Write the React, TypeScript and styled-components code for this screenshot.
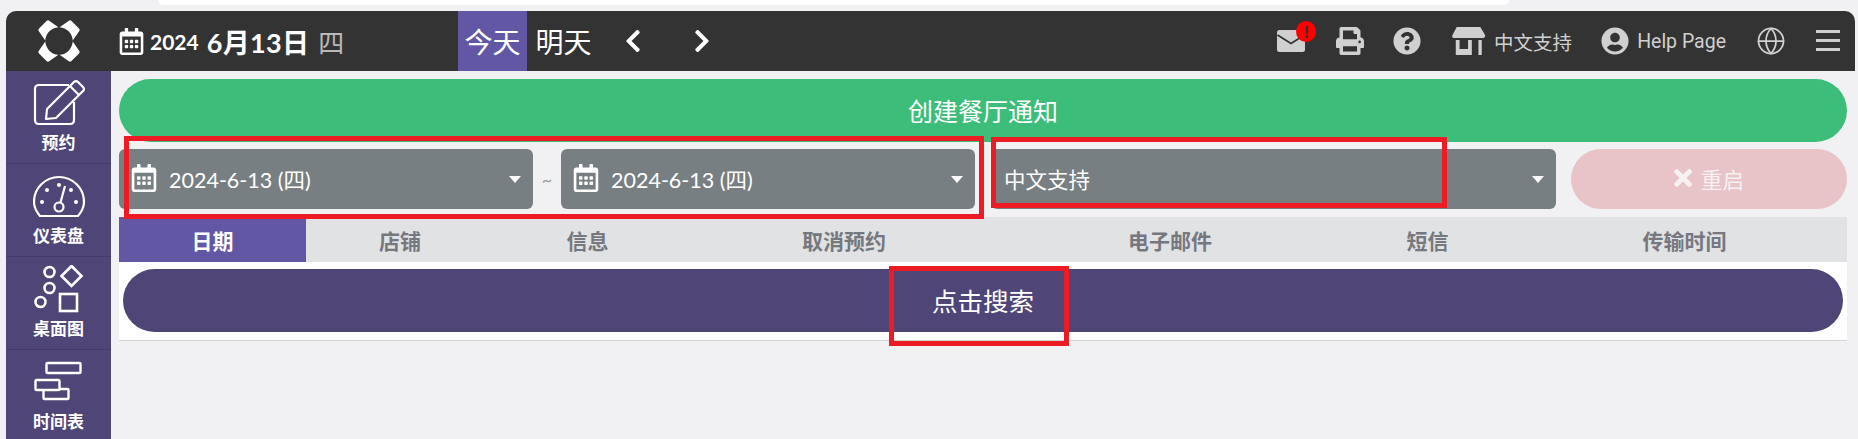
import styled, { createGlobalStyle } from "styled-components";
import { FaPrint, FaQuestionCircle, FaRegCalendarAlt, FaTimes, FaUserCircle, FaChevronLeft, FaChevronRight } from "react-icons/fa";
import { Globe } from "lucide-react";

const GlobalStyle = createGlobalStyle`
    * { box-sizing: border-box; }
    html, body { margin: 0; padding: 0; background: #f1f1f3; overflow: hidden; }
    body { font-family: Lato, "Noto Sans CJK SC", sans-serif; }
`;

const Page = styled.div`
    position: relative;
    width: 1858px;
    height: 439px;
    overflow: hidden;
    background: #f1f1f3;
`;

const TopSheet = styled.div`
    width: 1351px;
    height: 5px;
    margin-left: 158px;
    background: #fff;
    border-radius: 0 0 10px 10px;
`;

const Frame = styled.div`
    margin: 6px 3px 0 6px;
`;

const Header = styled.header`
    display: flex;
    align-items: center;
    height: 60px;
    background: #333;
    border-radius: 10px 10px 0 0;
    color: #fff;
`;

const LogoBox = styled.div`
    display: flex;
    justify-content: center;
    align-items: center;
    width: 105px;
    height: 100%;
`;

const DateBox = styled.div`
    display: flex;
    align-items: center;
    width: 347px;
    padding: 0 0 0 7px;
    height: 100%;
`;

const Year = styled.span`
    margin-left: 5px;
    font-size: 21px;
    font-weight: 700;
`;

const Day = styled.span`
    margin-left: 8px;
    font-size: 27px;
    font-weight: 700;
    letter-spacing: 0.3px;
`;

const Weekday = styled.span`
    margin-left: 9px;
    font-size: 26px;
    color: #b9b9b9;
`;

const DayTab = styled.div<{ $active?: boolean }>`
    display: flex;
    align-items: center;
    justify-content: center;
    width: 69px;
    height: 100%;
    padding-left: ${(p) => (p.$active ? "0" : "4px")};
    font-size: 28px;
    background: ${(p) => (p.$active ? "#6257a5" : "transparent")};
`;

const Arrows = styled.div`
    display: flex;
    align-items: center;
    gap: 43px;
    margin-left: 24px;
    font-size: 26px;
`;

const Tools = styled.div`
    display: flex;
    align-items: center;
    margin-left: auto;
    padding-right: 14px;
    color: #d0d0d0;
`;

const ToolIcon = styled.span<{ $gap: number }>`
    position: relative;
    display: flex;
    align-items: center;
    margin-left: ${(p) => p.$gap}px;
`;

const Badge = styled.span`
    position: absolute;
    top: -9px;
    right: -11px;
    width: 20px;
    height: 21px;
    border-radius: 50%;
    background: #f00;
    color: #333;
    font-size: 17px;
    font-weight: 900;
    line-height: 21px;
    text-align: center;
`;

const ToolLabel = styled.span`
    margin-left: 8px;
    font-size: 19.5px;
`;

const HelpLabel = styled(ToolLabel)`
    font-family: Roboto, "Noto Sans CJK SC", sans-serif;
`;

const Main = styled.div`
    display: flex;
    height: 368px;
`;

const Sidebar = styled.nav`
    flex: none;
    width: 105px;
    background: #4f4677;
`;

const NavItem = styled.div`
    display: flex;
    flex-direction: column;
    align-items: center;
    height: 93px;
    padding-top: 8px;
    border-bottom: 1px solid #443b69;
    color: #fff;
    font-size: 17px;
    font-weight: 700;
    svg { display: block; height: 50px; }
`;

const NavLabel = styled.span`
    margin-top: 2px;
    line-height: 24px;
`;

const Content = styled.main`
    flex: 1;
    padding: 8px 8px 0 8px;
`;

const NoticeButton = styled.div`
    display: flex;
    align-items: center;
    justify-content: center;
    height: 63px;
    padding-bottom: 2px;
    border-radius: 32px;
    background: #3dbd7a;
    color: #fff;
    font-size: 25px;
`;

const FilterRow = styled.div`
    display: flex;
    align-items: center;
    height: 60px;
    margin-top: 7px;
`;

const Select = styled.div<{ $width: number }>`
    position: relative;
    display: flex;
    align-items: center;
    gap: 11px;
    flex: none;
    width: ${(p) => p.$width}px;
    height: 100%;
    padding: 0 0 2px 11px;
    border-radius: 6px;
    background: #787f82;
    color: #fff;
    font-size: 21.5px;
`;

const StoreSelect = styled(Select)`
    margin-left: 16px;
    padding-left: 13px;
`;

const Caret = styled.span`
    position: absolute;
    right: 12px;
    top: 27px;
    border-left: 6px solid transparent;
    border-right: 6px solid transparent;
    border-top: 7px solid #fff;
`;

const Tilde = styled.span`
    flex: none;
    width: 28px;
    text-align: center;
    color: #9a9fa2;
    font-size: 18px;
`;

const ResetButton = styled.div`
    display: flex;
    align-items: center;
    justify-content: center;
    gap: 5px;
    flex: none;
    width: 276px;
    height: 100%;
    margin-left: 15px;
    padding: 0 4px 2px 0;
    border-radius: 30px;
    background: #e8c4c8;
    color: #f6f1f2;
    font-size: 21.5px;
`;

const TableHead = styled.div`
    display: grid;
    grid-template-columns: 187px 188px 187px 326px 326px 189px 1fr;
    height: 45px;
    margin-top: 8px;
    background: #e1e2e4;
`;

const HeadCell = styled.div<{ $active?: boolean }>`
    display: flex;
    align-items: center;
    justify-content: center;
    background: ${(p) => (p.$active ? "#6257a5" : "transparent")};
    color: ${(p) => (p.$active ? "#fff" : "#75787f")};
    font-size: 21px;
    font-weight: 700;
`;

const TableBody = styled.div`
    height: 79px;
    padding: 7px 4px 0 4px;
    background: #fff;
    border-bottom: 1px solid #d3d3d5;
`;

const SearchButton = styled.div`
    display: flex;
    align-items: center;
    justify-content: center;
    height: 63px;
    padding-bottom: 2px;
    border-radius: 32px;
    background: #4f4677;
    color: #fff;
    font-size: 25.5px;
`;

const Mark = styled.div<{ $x: number; $y: number; $w: number; $h: number }>`
    position: absolute;
    left: ${(p) => p.$x}px;
    top: ${(p) => p.$y}px;
    width: ${(p) => p.$w}px;
    height: ${(p) => p.$h}px;
    border: 5px solid #ed1c24;
`;

const Logo = () => (
    <svg width="44" height="44" viewBox="0 0 44 44" fill="#fff">
        <path d="M12.500 2 L21.400 8.300 A14 14 0 0 0 8.300 21.400 L2 12.500 Q0.500 11 2 9.500 L9.500 2 Q11 0.500 12.500 2Z" />
        <path d="M31.500 2 L22.600 8.300 A14 14 0 0 1 35.700 21.400 L42 12.500 Q43.500 11 42 9.500 L34.500 2 Q33 0.500 31.500 2Z" />
        <path d="M12.500 42 L21.400 35.700 A14 14 0 0 1 8.300 22.600 L2 31.500 Q0.500 33 2 34.500 L9.500 42 Q11 43.500 12.500 42Z" />
        <path d="M31.500 42 L22.600 35.700 A14 14 0 0 0 35.700 22.600 L42 31.500 Q43.500 33 42 34.500 L34.500 42 Q33 43.500 31.500 42Z" />
    </svg>
);

const MailIcon = () => (
    <svg width="28" height="22" viewBox="0 0 28 22">
        <rect width="28" height="22" rx="2.500" fill="#d0d0d0" />
        <path d="M0.500 5 L14 13.500 L27.500 5" fill="none" stroke="#333" strokeWidth="1.800" />
    </svg>
);

const StoreIcon = () => (
    <svg width="34" height="28" viewBox="0 0 36 28" preserveAspectRatio="none" fill="#d0d0d0">
        <path d="M5 0 H30 L35 8 Q35.500 11 33 11 H2 Q-0.500 11 0.500 8Z" />
        <path d="M4 13 H8 V22 H17 V13 H21 V28 H4Z" />
        <rect x="28" y="13" width="3.500" height="15" />
    </svg>
);

const MenuIcon = () => (
    <svg width="26" height="22" viewBox="0 0 26 22" fill="#d0d0d0">
        <rect x="1" width="24" height="3" />
        <rect x="1" y="9" width="24" height="3" />
        <rect x="1" y="18" width="24" height="3" />
    </svg>
);

const EditIcon = () => (
    <svg width="52" height="50" viewBox="0 0 52 50" fill="none" stroke="#fff" strokeWidth="2.200" strokeLinejoin="round">
        <path d="M36 6 H6 Q2 6 2 10 V41 Q2 45 6 45 H37 Q41 45 41 41 V23" />
        <path d="M13 40 L14 30 L41 3 Q43 1 45 3 L50 8 Q52 10 50 12 L23 39Z" />
        <path d="M37 7 L46 16" />
    </svg>
);

const GaugeIcon = () => (
    <svg width="52" height="42" viewBox="0 0 52 42" fill="none" stroke="#fff" strokeWidth="2.200">
        <path d="M7 40 Q1 33 1 26 A25 25 0 0 1 51 26 Q51 33 45 40Z" strokeLinejoin="round" />
        <circle cx="26" cy="31" r="4.500" />
        <path d="M27.500 26.500 L32 10" />
        <g fill="#fff" stroke="none">
            <circle cx="26" cy="9" r="2" />
            <circle cx="14" cy="14" r="2" />
            <circle cx="38" cy="14" r="2" />
            <circle cx="9" cy="26" r="2" />
            <circle cx="43" cy="26" r="2" />
        </g>
    </svg>
);

const ShapesIcon = () => (
    <svg width="50" height="50" viewBox="0 0 50 50" fill="none" stroke="#fff" strokeWidth="2.600">
        <circle cx="15.500" cy="7" r="5" />
        <circle cx="15.500" cy="23" r="5" />
        <circle cx="6.500" cy="37" r="5" />
        <path d="M37.500 1 L47.500 11 L37.500 21 L27.500 11Z" />
        <rect x="26" y="29" width="17" height="17" />
    </svg>
);

const GanttIcon = () => (
    <svg width="50" height="42" viewBox="0 0 50 42" fill="none" stroke="#fff" strokeWidth="2.400" strokeLinejoin="round">
        <rect x="12.500" y="1" width="34" height="10" rx="1" />
        <rect x="1.500" y="18" width="24" height="10" rx="1" />
        <path d="M9.500 28 V36 Q9.500 37 10.500 37 H33.500 Q34.500 37 34.500 36 V28 Q34.500 27 33.500 27 H25.500" />
    </svg>
);

const navItems = [
    { label: "预约", icon: <EditIcon /> },
    { label: "仪表盘", icon: <GaugeIcon /> },
    { label: "桌面图", icon: <ShapesIcon /> },
    { label: "时间表", icon: <GanttIcon /> },
];

const columns = ["日期", "店铺", "信息", "取消预约", "电子邮件", "短信", "传输时间"];

const DateSelect = () => (
    <Select $width={414}>
        <FaRegCalendarAlt size={28} />
        <span>2024-6-13 (四)</span>
        <Caret />
    </Select>
);

export default function App() {
    return (
        <Page>
            <GlobalStyle />
            <TopSheet />
            <Frame>
                <Header>
                    <LogoBox>
                        <Logo />
                    </LogoBox>
                    <DateBox>
                        <FaRegCalendarAlt size={27} />
                        <Year>2024</Year>
                        <Day>6月13日</Day>
                        <Weekday>四</Weekday>
                    </DateBox>
                    <DayTab $active>今天</DayTab>
                    <DayTab>明天</DayTab>
                    <Arrows>
                        <FaChevronLeft />
                        <FaChevronRight />
                    </Arrows>
                    <Tools>
                        <ToolIcon $gap={0}>
                            <MailIcon />
                            <Badge>!</Badge>
                        </ToolIcon>
                        <ToolIcon $gap={31}>
                            <FaPrint size={28} />
                        </ToolIcon>
                        <ToolIcon $gap={29}>
                            <FaQuestionCircle size={28} />
                        </ToolIcon>
                        <ToolIcon $gap={31}>
                            <StoreIcon />
                        </ToolIcon>
                        <ToolLabel>中文支持</ToolLabel>
                        <ToolIcon $gap={29}>
                            <FaUserCircle size={28} />
                        </ToolIcon>
                        <HelpLabel>Help Page</HelpLabel>
                        <ToolIcon $gap={30}>
                            <Globe size={30} strokeWidth={1.4} />
                        </ToolIcon>
                        <ToolIcon $gap={29}>
                            <MenuIcon />
                        </ToolIcon>
                    </Tools>
                </Header>
                <Main>
                    <Sidebar>
                        {navItems.map((item) => (
                            <NavItem key={item.label}>
                                {item.icon}
                                <NavLabel>{item.label}</NavLabel>
                            </NavItem>
                        ))}
                    </Sidebar>
                    <Content>
                        <NoticeButton>创建餐厅通知</NoticeButton>
                        <FilterRow>
                            <DateSelect />
                            <Tilde>~</Tilde>
                            <DateSelect />
                            <StoreSelect $width={565}>
                                <span>中文支持</span>
                                <Caret />
                            </StoreSelect>
                            <ResetButton>
                                <FaTimes size={26} />
                                重启
                            </ResetButton>
                        </FilterRow>
                        <TableHead>
                            {columns.map((name, i) => (
                                <HeadCell key={name} $active={i === 0}>
                                    {name}
                                </HeadCell>
                            ))}
                        </TableHead>
                        <TableBody>
                            <SearchButton>点击搜索</SearchButton>
                        </TableBody>
                    </Content>
                </Main>
            </Frame>
            <Mark $x={124} $y={136} $w={860} $h={83} />
            <Mark $x={991} $y={137} $w={456} $h={71} />
            <Mark $x={889} $y={266} $w={180} $h={80} />
        </Page>
    );
}
